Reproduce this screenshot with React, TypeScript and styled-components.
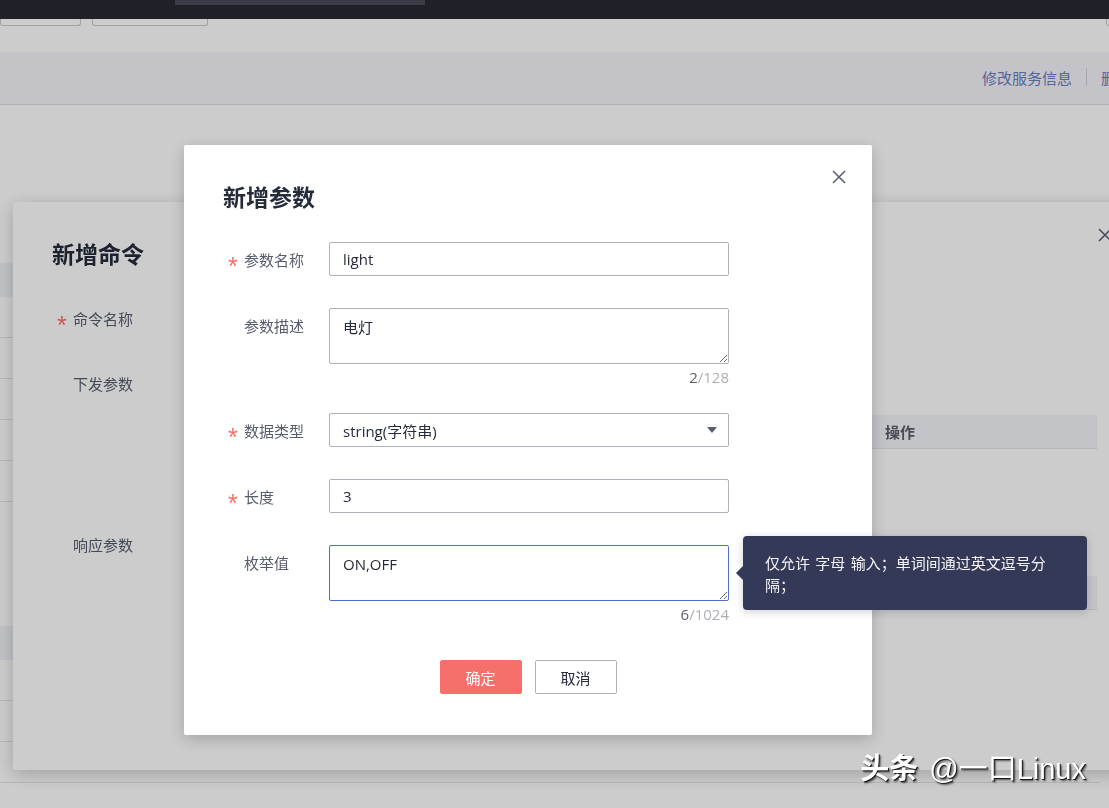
import React from "react";
import styled, { createGlobalStyle } from "styled-components";

const GlobalStyle = createGlobalStyle`
  html, body { margin: 0; padding: 0; overflow: hidden; background: #fff; }
  body {
    font-family: "Open Sans", "Noto Sans CJK SC", sans-serif;
    font-size: 15px;
    color: #252b3a;
  }
  * { box-sizing: border-box; }
`;

/* ---------- base page (under mask) ---------- */
const Page = styled.div`
  width: 1109px;
  height: 808px;
  display: flex;
  flex-direction: column;
  background: #fff;
  overflow: hidden;
`;
const TopBar = styled.header`
  flex: none;
  height: 19px;
  background: #272932;
  padding-left: 175px;
`;
const TopTab = styled.div`
  width: 250px;
  height: 5px;
  background: #4a4c59;
`;
const Toolbar = styled.div`
  flex: none;
  height: 33px;
  display: flex;
  gap: 11px;
`;
const ToolButton = styled.div<{ $w: number; $push?: boolean }>`
  flex: none;
  width: ${(p) => p.$w}px;
  height: 7px;
  border: 1px solid #c9ccd3;
  border-top: none;
  border-radius: 0 0 3px 3px;
  margin-left: ${(p) => (p.$push ? "auto" : "0")};
  margin-right: ${(p) => (p.$push ? "-57px" : "0")};
`;
const ServiceBar = styled.div`
  flex: none;
  height: 53px;
  background: #f5f6fa;
  border-bottom: 1px solid #dcdee3;
  display: flex;
  align-items: center;
  padding-bottom: 2px;
  overflow: hidden;
`;
const BarLinks = styled.nav`
  margin-left: auto;
  margin-right: -52px;
  display: flex;
  align-items: center;
  gap: 14px;
  font-family: "Noto Sans CJK SC", sans-serif;
  font-size: 15px;
  color: #6b7ec4;
  white-space: nowrap;
`;
const BarDivider = styled.span`
  width: 1px;
  height: 18px;
  background: #d0d3da;
`;
const PageBody = styled.div`
  padding-top: 158px;
  display: flex;
  flex-direction: column;
  gap: 124px;
`;
const PageTable = styled.div`
  width: 1100px;
`;
const PageTableHead = styled.div`
  height: 34px;
  background: #f3f4f9;
`;
const PageTableRow = styled.div`
  height: 41px;
  border-bottom: 1px solid #e3e5ea;
`;

/* ---------- overlays ---------- */
const Mask = styled.div`
  position: fixed;
  inset: 0;
  background: rgba(0, 0, 0, 0.2);
  z-index: 10;
`;

const CloseButton = styled.button<{ $top: number; $right: number }>`
  position: absolute;
  top: ${(p) => p.$top}px;
  right: ${(p) => p.$right}px;
  width: 14px;
  height: 14px;
  padding: 0;
  border: none;
  background: transparent;
  display: flex;
`;

const CloseIcon = () => (
  <svg width="14" height="14" viewBox="0 0 14 14">
    <path d="M1 1 L13 13 M13 1 L1 13" stroke="#575d6c" strokeWidth="1.5" fill="none" />
  </svg>
);

/* second (background) dialog */
const BackDialog = styled.section`
  position: fixed;
  left: 13px;
  top: 202px;
  width: 1140px;
  height: 568px;
  background: #fff;
  border-radius: 2px;
  box-shadow: 0 4px 18px rgba(0, 0, 0, 0.22);
  z-index: 5;
  padding: 36px 0 0 39px;
`;
const DialogTitle = styled.h2`
  margin: 0;
  font-family: "Noto Sans CJK SC", sans-serif;
  font-size: 23px;
  line-height: 30px;
  font-weight: 700;
  color: #252b3a;
`;
const BackForm = styled.div`
  margin-top: 33px;
  display: grid;
  grid-template-columns: 81px 897px;
  column-gap: 67px;
  row-gap: 31px;
`;
const Label = styled.div`
  height: 34px;
  display: flex;
  font-family: "Noto Sans CJK SC", sans-serif;
  font-size: 15px;
  line-height: 32px;
  padding-top: 2px;
  color: #575d6c;
  white-space: nowrap;
`;
const StarSlot = styled.span`
  flex: none;
  width: 21px;
  padding-left: 5px;
  line-height: 32px;
`;
const StarGlyph = styled.span`
  font-family: "Liberation Sans", sans-serif;
  font-size: 25px;
  line-height: 0;
  vertical-align: -9px;
  color: #f66f6a;
`;
const Section = styled.div`
  display: flex;
  flex-direction: column;
`;
const GhostBar = styled.div`
  height: 34px;
`;
const ParamTable = styled.div`
  margin-top: 15px;
`;
const ParamHead = styled.div`
  height: 34px;
  display: grid;
  grid-template-columns: repeat(4, 1fr) 224px;
  background: #f4f5fa;
  border-bottom: 1px solid #e3e5ea;
`;
const HeadCell = styled.div`
  padding-left: 12px;
  font-family: "Noto Sans CJK SC", sans-serif;
  font-size: 15px;
  font-weight: 700;
  line-height: 34px;
  color: #5c606b;
`;
const ParamBody = styled.div`
  height: 47px;
`;

/* foreground modal */
const Modal = styled.section`
  position: fixed;
  left: 184px;
  top: 145px;
  width: 688px;
  height: 590px;
  background: #fff;
  border-radius: 2px;
  box-shadow: 0 4px 16px rgba(0, 0, 0, 0.2);
  z-index: 20;
  padding: 36px 39px 0;
`;
const Form = styled.div`
  margin-top: 31px;
  display: flex;
  flex-direction: column;
`;
const FormItem = styled.div<{ $mb: number }>`
  display: grid;
  grid-template-columns: 81px 400px;
  column-gap: 25px;
  align-items: start;
  margin-bottom: ${(p) => p.$mb}px;
`;
const Field = styled.div`
  position: relative;
  display: flex;
  flex-direction: column;
`;
const TextInput = styled.input`
  width: 400px;
  height: 34px;
  border: 1px solid #adb0b8;
  border-radius: 2px;
  padding: 0 13px;
  font-family: "Open Sans", "Noto Sans CJK SC", sans-serif;
  font-size: 15px;
  color: #252b3a;
  outline: none;
`;
const TextArea = styled.textarea<{ $focus?: boolean }>`
  width: 400px;
  height: 56px;
  border: 1px solid ${(p) => (p.$focus ? "#526ecc" : "#adb0b8")};
  border-radius: 2px;
  padding: 7px 13px 6px;
  font-family: "Open Sans", "Noto Sans CJK SC", sans-serif;
  font-size: 15px;
  line-height: 22px;
  color: #252b3a;
  outline: none;
  resize: vertical;
  display: block;
`;
const Counter = styled.div`
  margin-top: 4px;
  text-align: right;
  font-size: 15px;
  line-height: 18px;
  color: #adb0b8;
`;
const CounterNow = styled.span`
  color: #575d6c;
`;
const SelectBox = styled.div`
  width: 400px;
  height: 34px;
  border: 1px solid #adb0b8;
  border-radius: 2px;
  padding: 0 11px 0 13px;
  display: flex;
  align-items: center;
  justify-content: space-between;
  font-size: 15px;
  color: #252b3a;
`;
const Footer = styled.div`
  margin-top: 37px;
  display: flex;
  justify-content: center;
  gap: 13px;
`;
const Button = styled.button<{ $primary?: boolean }>`
  width: 82px;
  height: 34px;
  border-radius: 2px;
  border: 1px solid ${(p) => (p.$primary ? "#f66f6a" : "#adb0b8")};
  background: ${(p) => (p.$primary ? "#f66f6a" : "#fff")};
  color: ${(p) => (p.$primary ? "#fff" : "#252b3a")};
  font-family: "Noto Sans CJK SC", sans-serif;
  font-size: 15px;
  padding: 0;
`;
const Tooltip = styled.div`
  position: absolute;
  left: calc(100% + 14px);
  top: -9px;
  width: 344px;
  padding: 16px 22px 14px;
  background: #343957;
  color: #f4f4f8;
  border-radius: 4px;
  box-shadow: 0 2px 10px rgba(0, 0, 0, 0.18);
  font-family: "Noto Sans CJK SC", sans-serif;
  font-size: 15px;
  line-height: 22px;
  word-spacing: 2px;
  &::before {
    content: "";
    position: absolute;
    left: -7px;
    top: 30px;
    border-style: solid;
    border-width: 7px 7px 7px 0;
    border-color: transparent #343957 transparent transparent;
  }
`;

const Watermark = styled.div`
  position: fixed;
  right: 23px;
  bottom: 22px;
  z-index: 30;
  font-family: "Liberation Sans", "Noto Sans CJK SC", sans-serif;
  font-size: 29px;
  line-height: 34px;
  color: #fff;
  text-shadow: 1px 1px 0 #1a1a1a, 2px 2px 2px rgba(0, 0, 0, 0.6);
  white-space: nowrap;
`;
const WatermarkBrand = styled.span`
  font-family: "Noto Sans CJK SC", sans-serif;
  font-weight: 700;
  margin-right: 3px;
`;

const Caret = () => (
  <svg width="10" height="6" viewBox="0 0 10 6">
    <path d="M0 0 L10 0 L5 6 Z" fill="#575d6c" />
  </svg>
);

const FieldLabel = ({ required, children }: { required?: boolean; children: React.ReactNode }) => (
  <Label>
    <StarSlot>{required ? <StarGlyph>*</StarGlyph> : null}</StarSlot>
    <span>{children}</span>
  </Label>
);

export default function App() {
  return (
    <>
      <GlobalStyle />
      <Page>
        <TopBar>
          <TopTab />
        </TopBar>
        <Toolbar>
          <ToolButton $w={81} />
          <ToolButton $w={116} />
          <ToolButton $w={60} $push />
        </Toolbar>
        <ServiceBar>
          <BarLinks>
            <span>修改服务信息</span>
            <BarDivider />
            <span>删除服务</span>
          </BarLinks>
        </ServiceBar>
        <PageBody>
          <PageTable>
            <PageTableHead />
            {[0, 1, 2, 3, 4].map((i) => (
              <PageTableRow key={i} />
            ))}
          </PageTable>
          <PageTable>
            <PageTableHead />
            {[0, 1, 2].map((i) => (
              <PageTableRow key={i} />
            ))}
          </PageTable>
        </PageBody>
      </Page>

      <BackDialog>
        <DialogTitle>新增命令</DialogTitle>
        <CloseButton $top={26} $right={41} aria-label="关闭">
          <CloseIcon />
        </CloseButton>
        <BackForm>
          <FieldLabel required>命令名称</FieldLabel>
          <GhostBar />
          <FieldLabel>下发参数</FieldLabel>
          <Section>
            <GhostBar />
            <ParamTable>
              <ParamHead>
                <HeadCell />
                <HeadCell />
                <HeadCell />
                <HeadCell />
                <HeadCell>操作</HeadCell>
              </ParamHead>
              <ParamBody />
            </ParamTable>
          </Section>
          <FieldLabel>响应参数</FieldLabel>
          <Section>
            <GhostBar />
            <ParamTable>
              <ParamHead>
                <HeadCell />
                <HeadCell />
                <HeadCell />
                <HeadCell />
                <HeadCell />
              </ParamHead>
            </ParamTable>
          </Section>
        </BackForm>
      </BackDialog>

      <Mask />

      <Modal>
        <DialogTitle>新增参数</DialogTitle>
        <CloseButton $top={25} $right={26} aria-label="关闭">
          <CloseIcon />
        </CloseButton>
        <Form>
          <FormItem $mb={32}>
            <FieldLabel required>参数名称</FieldLabel>
            <Field>
              <TextInput readOnly value="light" />
            </Field>
          </FormItem>
          <FormItem $mb={27}>
            <FieldLabel>参数描述</FieldLabel>
            <Field>
              <TextArea readOnly value="电灯" />
              <Counter>
                <CounterNow>2</CounterNow>/128
              </Counter>
            </Field>
          </FormItem>
          <FormItem $mb={32}>
            <FieldLabel required>数据类型</FieldLabel>
            <Field>
              <SelectBox>
                <span>string(字符串)</span>
                <Caret />
              </SelectBox>
            </Field>
          </FormItem>
          <FormItem $mb={32}>
            <FieldLabel required>长度</FieldLabel>
            <Field>
              <TextInput readOnly value="3" />
            </Field>
          </FormItem>
          <FormItem $mb={0}>
            <FieldLabel>枚举值</FieldLabel>
            <Field>
              <TextArea $focus readOnly value="ON,OFF" />
              <Counter>
                <CounterNow>6</CounterNow>/1024
              </Counter>
              <Tooltip>仅允许 字母 输入；单词间通过英文逗号分隔；</Tooltip>
            </Field>
          </FormItem>
        </Form>
        <Footer>
          <Button $primary>确定</Button>
          <Button>取消</Button>
        </Footer>
      </Modal>

      <Watermark>
        <WatermarkBrand>头条</WatermarkBrand> @一口Linux
      </Watermark>
    </>
  );
}
